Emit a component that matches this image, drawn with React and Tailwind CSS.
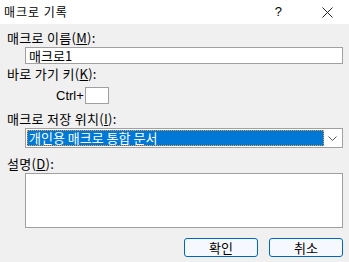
import React from "react";

const font = { fontFamily: '"Noto Sans CJK KR", "Noto Sans", sans-serif' };

const Label = ({ children, className = "" }) => (
  <div className={`h-[16px] text-[13px] leading-[16px] tracking-[0.3px] text-[#000] ${className}`}>{children}</div>
);

export default function App() {
  return (
    <div className="w-[349px] h-[262px] bg-[#f0f0f0] overflow-hidden flex flex-col" style={font}>
      {/* TITLE BAR */}
      <div className="h-[24px] bg-white flex items-center shrink-0">
        <span className="ml-[4px] text-[12px] leading-[14px] tracking-[1px] text-black">매크로 기록</span>
        <span className="ml-auto mr-[40px] text-[13px] text-black" style={{ fontFamily: '"Liberation Sans", sans-serif' }}>?</span>
        <svg width="11" height="11" viewBox="0 0 11 11" className="mr-[16px]">
          <path d="M0.5 0.5 L10.5 10.5 M10.5 0.5 L0.5 10.5" stroke="#222" strokeWidth="1" />
        </svg>
      </div>

      {/* BODY */}
      <div className="flex flex-col pl-[7px] pr-[6px]">
        <Label className="mt-[6px]">
          매크로 이름(<span className="underline">M</span>):
        </Label>
        <div className="ml-[18px] mt-[1px] h-[17px] bg-white border border-[#a0a0a0] flex items-center pl-[3px] text-[13px] leading-[15px]">
          매크로1
        </div>

        <Label className="mt-[2px]">
          바로 가기 키(<span className="underline">K</span>):
        </Label>
        <div className="flex items-center mt-[5px] ml-[49px]">
          <span className="text-[13px] leading-[16px]" style={{ fontFamily: '"Liberation Sans", sans-serif' }}>Ctrl+</span>
          <div className="ml-[1px] w-[24px] h-[17px] bg-white border border-[#a0a0a0]" />
        </div>

        <Label className="mt-[7px]">
          매크로 저장 위치(<span className="underline">I</span>):
        </Label>
        <div className="ml-[18px] mt-[1px] h-[20px] bg-white border border-[#a0a0a0] flex items-stretch p-[1px]">
          <div className="flex-1 bg-[#0078d7] border border-dotted border-[#f59b3c] flex items-center pl-[1px] text-[13px] leading-[14px] text-white">
            개인용 매크로 통합 문서
          </div>
          <div className="w-[17px] flex items-center justify-center bg-white">
            <svg width="9" height="5" viewBox="0 0 9 5">
              <path d="M0.5 0.5 L4.5 4.5 L8.5 0.5" fill="none" stroke="#555" strokeWidth="1" />
            </svg>
          </div>
        </div>

        <Label className="mt-[8px]">
          설명(<span className="underline">D</span>):
        </Label>
        <div className="ml-[18px] mt-[1px] h-[55px] bg-white border border-[#a0a0a0]" />

        <div className="flex justify-end gap-[11px] mt-[10px]">
          <button className="w-[74px] h-[19px] bg-[#f5f9fd] border border-[#0067c0] rounded-[3px] text-[13px] leading-[15px] text-black">
            확인
          </button>
          <button className="w-[74px] h-[19px] bg-[#f5f9fd] border border-[#0067c0] rounded-[3px] text-[13px] leading-[15px] text-black">
            취소
          </button>
        </div>
      </div>
    </div>
  );
}
